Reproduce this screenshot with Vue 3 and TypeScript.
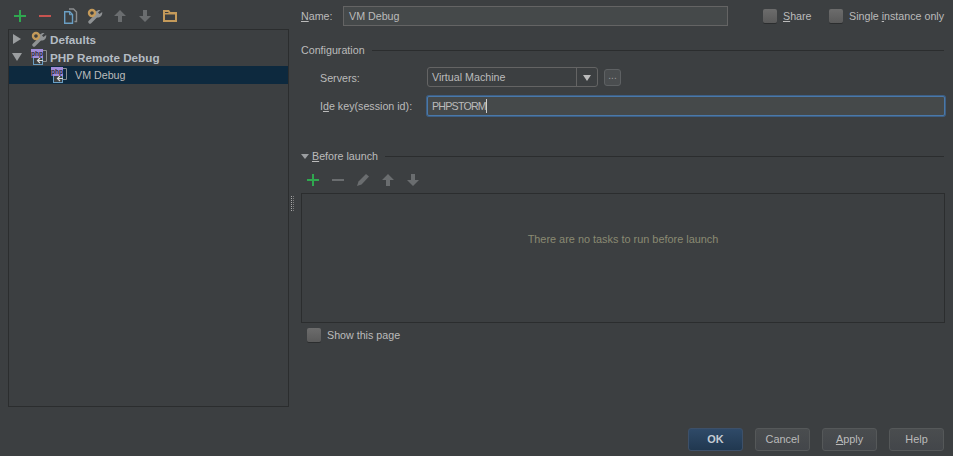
<template>
  <div class="dialog">
    <!-- icon sprite -->
    <svg class="sprite" width="0" height="0">
      <symbol id="i-plus" viewBox="0 0 16 16"><path d="M8 2v12M2 8h12" stroke="#2fa84f" stroke-width="2" fill="none" /></symbol>
      <symbol id="i-minus" viewBox="0 0 16 16"><path d="M2 8h12" stroke="#c75450" stroke-width="2" fill="none" /></symbol>
      <symbol id="i-minus-off" viewBox="0 0 16 16"><path d="M2 8h12" stroke="#6a6d6f" stroke-width="2" fill="none" /></symbol>
      <symbol id="i-copy" viewBox="0 0 16 16">
        <path d="M7 1h4.500l3 3v9.500h-2" stroke="#8a8d8f" stroke-width="1.400" fill="none" />
        <path d="M2.700 3.700h5l2.800 2.800v8.800h-7.800z" stroke="#6a9fc4" stroke-width="1.400" fill="#3c3f41" />
        <path d="M7.500 3.700v3h3" stroke="#6a9fc4" fill="none" />
      </symbol>
      <symbol id="i-wrench" viewBox="0 0 16 16">
        <path d="M3 14l6.500-6.500" stroke="#8f9294" stroke-width="3.400" stroke-linecap="round" fill="none" />
        <path d="M8 7c-.5-3 2-5.500 5.500-5l-2.500 2.500 1.500 1.500 2.700-2c.5 3.500-2.200 6-5.700 5.500z" fill="#8f9294" />
        <circle cx="5" cy="5" r="3" fill="#3c3f41" stroke="#c49a5a" stroke-width="2.400" />
      </symbol>
      <symbol id="i-up" viewBox="0 0 16 16"><path d="M8 2l6 6h-4v6H6V8H2z" fill="#6a6d6f" /></symbol>
      <symbol id="i-down" viewBox="0 0 16 16"><path d="M8 14l6-6h-4V2H6v6H2z" fill="#6a6d6f" /></symbol>
      <symbol id="i-folder" viewBox="0 0 16 16">
        <path d="M2 13V3h4.500l1.500 2h6v8z" fill="none" stroke="#c49a5a" stroke-width="2" />
        <path d="M2 5h12v1.500H2z" fill="#c49a5a" />
      </symbol>
      <symbol id="i-pencil" viewBox="0 0 16 16"><path d="M11 2l3 2.500-7.500 8L2 14l1.500-4.500z" fill="#6a6d6f" /></symbol>
      <symbol id="i-php" viewBox="0 0 16 16">
        <path d="M12 1.500h3.500v11H12" fill="none" stroke="#8a8d8f" />
        <rect x="2.500" y="6.500" width="9" height="9" fill="#3c3f41" stroke="#6a9fc4" />
        <rect x="0" y="0" width="12" height="9" fill="#a18cd9" />
        <path d="M12 11.500H6.500M9 9L6.500 11.500 9 14" fill="none" stroke="#d5d7d9" stroke-width="1.200" />
      </symbol>
    </svg>

    <div class="main">
      <div class="left">
        <div class="toolbar left-tools">
          <button v-for="icon in leftTools" :key="icon" class="tool">
            <svg width="16" height="16"><use :href="'#' + icon" /></svg>
          </button>
        </div>
        <ul class="tree">
          <li v-for="row in treeRows" :key="row.label" class="tree-row" :class="{ selected: row.selected, child: row.child }">
            <span v-if="!row.child" class="twisty" :class="row.open ? 'open' : 'closed'"></span>
            <svg class="tree-icon" width="16" height="16">
              <use :href="'#' + row.icon" />
              <text v-if="row.icon === 'i-php'" x="6" y="6.500" text-anchor="middle" class="php-text">php</text>
            </svg>
            <span class="tree-label" :class="{ bold: !row.child }">{{ row.label }}</span>
          </li>
        </ul>
      </div>

      <div class="splitter"><span class="dots"></span></div>

      <div class="right">
        <div class="name-row">
          <label class="name-label"><u>N</u>ame:</label>
          <div class="input name-input">VM Debug</div>
          <label class="check share"><span class="box"></span><span><u>S</u>hare</span></label>
          <label class="check single"><span class="box"></span><span>Single <u>i</u>nstance only</span></label>
        </div>

        <div class="section config-title">
          <span>Configuration</span><span class="rule"></span>
        </div>
        <div class="field servers">
          <label class="field-label">Servers:</label>
          <div class="combo">
            <span class="combo-value">Virtual Machine</span>
            <span class="combo-arrow"><span class="arrow-down"></span></span>
          </div>
          <button class="dots-btn">...</button>
        </div>
        <div class="field idekey">
          <label class="field-label">I<u>d</u>e key(session id):</label>
          <div class="input focused"><span class="key-value">PHPSTORM</span><span class="caret"></span></div>
        </div>

        <div class="section before-title">
          <span class="section-toggle"></span>
          <span><u>B</u>efore launch</span><span class="rule"></span>
        </div>
        <div class="toolbar before-tools">
          <button v-for="icon in beforeTools" :key="icon" class="tool">
            <svg width="16" height="16"><use :href="'#' + icon" /></svg>
          </button>
        </div>
        <div class="tasks">There are no tasks to run before launch</div>
        <label class="check show-page"><span class="box"></span><span>Show this page</span></label>
      </div>
    </div>

    <div class="footer">
      <button v-for="btn in buttons" :key="btn.label" class="btn" :class="{ primary: btn.primary }">
        <u v-if="btn.mnemonic">{{ btn.mnemonic }}</u>{{ btn.label }}
      </button>
    </div>
  </div>
</template>

<script setup lang="ts">
interface TreeRow {
  label: string;
  icon: string;
  open?: boolean;
  child?: boolean;
  selected?: boolean;
}

const leftTools = ['i-plus', 'i-minus', 'i-copy', 'i-wrench', 'i-up', 'i-down', 'i-folder'];
const beforeTools = ['i-plus', 'i-minus-off', 'i-pencil', 'i-up', 'i-down'];

const treeRows: TreeRow[] = [
  { label: 'Defaults', icon: 'i-wrench' },
  { label: 'PHP Remote Debug', icon: 'i-php', open: true },
  { label: 'VM Debug', icon: 'i-php', child: true, selected: true },
];

const buttons = [
  { label: 'OK', primary: true },
  { label: 'Cancel' },
  { label: 'pply', mnemonic: 'A' },
  { label: 'Help' },
];
</script>

<style scoped>
.dialog {
  width: 953px;
  height: 456px;
  overflow: hidden;
  display: flex;
  flex-direction: column;
  background: #3c3f41;
  color: #bbbbbb;
  font-family: "Liberation Sans", Arial, sans-serif;
  font-size: 10.700px;
}
.sprite {
  position: absolute;
}
.php-text {
  font-family: "Liberation Sans", sans-serif;
  font-size: 6.500px;
  font-weight: 700;
  fill: #2b2b33;
}
u {
  text-underline-offset: 1px;
}

.main {
  height: 420px;
  display: flex;
}
.left {
  width: 281px;
  margin-left: 8px;
  height: 407px;
  display: flex;
  flex-direction: column;
}
.toolbar {
  display: flex;
  gap: 9px;
}
.left-tools {
  height: 29px;
  padding: 8px 0 0 4px;
  box-sizing: border-box;
}
.tool {
  width: 16px;
  height: 16px;
  padding: 0;
  border: none;
  background: none;
}
.tree {
  flex: 1;
  margin: 0;
  padding: 0;
  list-style: none;
  border: 1px solid #2b2d2e;
}
.tree-row {
  height: 18px;
  display: flex;
  align-items: center;
  padding-left: 3px;
}
.tree-row.child {
  padding-left: 42px;
}
.tree-row.selected {
  background: #0d293e;
}
.tree-icon {
  flex: none;
}
.twisty {
  width: 0;
  height: 0;
}
.twisty.closed {
  border-left: 8px solid #9b9ea0;
  border-top: 5px solid transparent;
  border-bottom: 5px solid transparent;
  margin: 0 10px 0 1px;
}
.twisty.open {
  border-top: 8px solid #9b9ea0;
  border-left: 5px solid transparent;
  border-right: 5px solid transparent;
  margin-right: 9px;
}
.tree-label.bold {
  font-weight: 700;
  font-size: 11.700px;
  margin-left: 3px;
  color: #b4bcc4;
}
.tree-row.child .tree-label {
  margin-left: 8px;
}

.splitter {
  width: 12px;
  height: 407px;
  display: flex;
  align-items: center;
  flex-shrink: 0;
}
.dots {
  width: 1px;
  height: 15px;
  margin-left: 2px;
  border-left: 1px dotted #a8a8a8;
  border-right: 1px dotted #7d7d7d;
}

.right {
  flex: 1;
  min-width: 0;
  padding-right: 8px;
  display: flex;
  flex-direction: column;
}
.name-row {
  height: 20px;
  margin-top: 6px;
  display: flex;
  align-items: center;
}
.name-label {
  flex: none;
  width: 42px;
}
.input {
  height: 20px;
  box-sizing: border-box;
  padding: 0 4px;
  display: flex;
  align-items: center;
  background: #45494a;
  border: 1px solid #646464;
}
.name-input {
  flex: none;
  width: 385px;
  margin-right: 35px;
  padding-left: 5px;
}
.check {
  display: flex;
  align-items: center;
  gap: 6px;
  white-space: nowrap;
}
.box {
  flex: none;
  width: 14px;
  height: 14px;
  box-sizing: border-box;
  border-radius: 2px;
  background: linear-gradient(#6c6c6c, #5a5a5a);
  box-shadow: 0 1px 0 #2b2d2e;
}
.share {
  width: 66px;
  flex: none;
}

.section {
  display: flex;
  align-items: center;
}
.rule {
  flex: 1;
  height: 1px;
  margin: 0 1px 0 7px;
  background: #2b2d2e;
}
.config-title {
  height: 16px;
  margin-top: 16px;
}
.field {
  display: flex;
  align-items: center;
  padding-left: 19px;
}
.field-label {
  flex: none;
  width: 107px;
}
.servers {
  margin-top: 9px;
  height: 20px;
}
.servers .field-label {
  padding-top: 2px;
}
.combo {
  width: 171px;
  height: 20px;
  box-sizing: border-box;
  display: flex;
  border: 1px solid #646464;
  border-radius: 3px;
  background: #3c3f41;
}
.combo-value {
  flex: 1;
  padding-left: 4px;
  line-height: 18px;
}
.combo-arrow {
  width: 20px;
  display: flex;
  align-items: center;
  justify-content: center;
  border-left: 1px solid #646464;
}
.arrow-down {
  width: 0;
  height: 0;
  margin-top: 2px;
  border-top: 6px solid #bbbbbb;
  border-left: 4px solid transparent;
  border-right: 4px solid transparent;
}
.dots-btn {
  width: 17px;
  height: 17px;
  margin-left: 6px;
  padding: 0 0 5px;
  font: 10px "Liberation Sans", sans-serif;
  color: #9a9a9a;
  background: #4a4d4f;
  border: 1px solid #5e6163;
  border-radius: 3px;
}
.idekey {
  margin-top: 9px;
  height: 20px;
}
.idekey .input {
  flex: 1;
}
.key-value {
  letter-spacing: -0.800px;
}
.focused {
  border: 1px solid #4a78a8;
  border-radius: 2px;
  box-shadow: 0 0 0 1px #3d5f85;
}
.caret {
  width: 1px;
  height: 14px;
  background: #cfcfcf;
}
.before-title {
  height: 16px;
  margin-top: 32px;
}
.section-toggle {
  width: 0;
  height: 0;
  margin-right: 3px;
  border-top: 5px solid #9b9ea0;
  border-left: 4px solid transparent;
  border-right: 4px solid transparent;
}
.before-tools {
  height: 16px;
  margin: 8px 0 5px 4px;
}
.tasks {
  height: 130px;
  box-sizing: border-box;
  padding-top: 39px;
  text-align: center;
  font-size: 10.900px;
  color: #8a8a72;
  border: 1px solid #2b2d2e;
}
.show-page {
  margin: 5px 0 0 6px;
}

.footer {
  flex: 1;
  display: flex;
  justify-content: flex-end;
  gap: 12px;
  padding: 8px 9px 0 0;
}
.btn {
  width: 55px;
  height: 23px;
  padding: 0 0 2px;
  font: 10.900px "Liberation Sans", Arial, sans-serif;
  color: #bbbbbb;
  background: linear-gradient(#4a4d4f, #43464a);
  border: 1px solid #555859;
  border-radius: 3px;
}
.btn.primary {
  font-weight: 700;
  color: #c5ccd3;
  background: linear-gradient(#2f4a68, #213850);
  border-color: #3d5069;
}
</style>
